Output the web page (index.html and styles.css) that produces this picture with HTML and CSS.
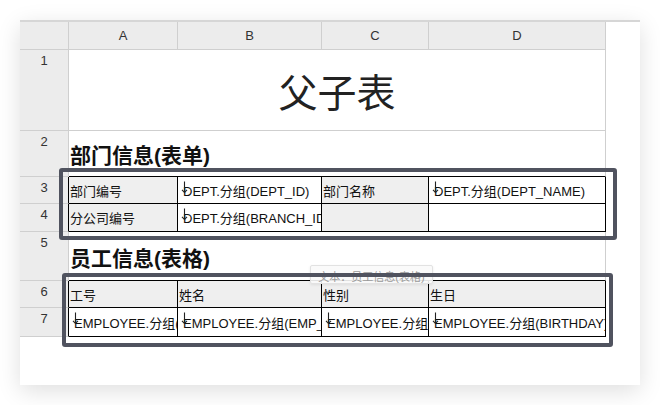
FILE: index.html
```html
<!DOCTYPE html>
<html lang="zh-CN">
<head>
  <meta charset="UTF-8">
  <meta name="viewport" content="width=device-width, initial-scale=1.0">
  <title>父子表</title>
  <link rel="stylesheet" href="styles.css">
</head>
<body>
  <div class="card">
    <div class="sheet">
      <div class="corner"></div>
      <div class="colhd">A</div>
      <div class="colhd">B</div>
      <div class="colhd">C</div>
      <div class="colhd">D</div>

      <div class="rowhd">1</div>
      <div class="cell merged title">父子表</div>

      <div class="rowhd">2</div>
      <div class="cell merged section edge-b">部门信息(表单)</div>

      <div class="rowhd edge-r">3</div>
      <div class="cell box label">部门编号</div>
      <div class="cell box field"><svg class="bind" width="7" height="13" viewBox="0 0 7 13"><path d="M3.5 0.5V11.5M1 8.8L3.5 11.5L6 8.8" /></svg>DEPT.分组(DEPT_ID)</div>
      <div class="cell box label">部门名称</div>
      <div class="cell box field"><svg class="bind" width="7" height="13" viewBox="0 0 7 13"><path d="M3.5 0.5V11.5M1 8.8L3.5 11.5L6 8.8" /></svg>DEPT.分组(DEPT_NAME)</div>

      <div class="rowhd edge-r">4</div>
      <div class="cell box label">分公司编号</div>
      <div class="cell box field"><svg class="bind" width="7" height="13" viewBox="0 0 7 13"><path d="M3.5 0.5V11.5M1 8.8L3.5 11.5L6 8.8" /></svg>DEPT.分组(BRANCH_ID)</div>
      <div class="cell box label"></div>
      <div class="cell box field"></div>

      <div class="rowhd">5</div>
      <div class="cell merged section edge-b">员工信息(表格)</div>

      <div class="rowhd edge-r">6</div>
      <div class="cell box label">工号</div>
      <div class="cell box label">姓名</div>
      <div class="cell box label">性别</div>
      <div class="cell box label">生日</div>

      <div class="rowhd edge-r">7</div>
      <div class="cell box field"><svg class="bind" width="7" height="13" viewBox="0 0 7 13"><path d="M3.5 0.5V11.5M1 8.8L3.5 11.5L6 8.8" /></svg>EMPLOYEE.分组(EMP_ID)</div>
      <div class="cell box field"><svg class="bind" width="7" height="13" viewBox="0 0 7 13"><path d="M3.5 0.5V11.5M1 8.8L3.5 11.5L6 8.8" /></svg>EMPLOYEE.分组(EMP_NAME)</div>
      <div class="cell box field"><svg class="bind" width="7" height="13" viewBox="0 0 7 13"><path d="M3.5 0.5V11.5M1 8.8L3.5 11.5L6 8.8" /></svg>EMPLOYEE.分组(SEX)</div>
      <div class="cell box field"><svg class="bind" width="7" height="13" viewBox="0 0 7 13"><path d="M3.5 0.5V11.5M1 8.8L3.5 11.5L6 8.8" /></svg>EMPLOYEE.分组(BIRTHDAY)</div>
    </div>

    <div class="select sel-dept"></div>
    <div class="tip">文本：员工信息(表格)</div>
    <div class="select sel-emp"></div>
  </div>
</body>
</html>
```

FILE: styles.css
```css
* {
  box-sizing: border-box;
}
body {
  margin: 0;
  padding: 20px;
  background: #ffffff;
  font-family: 'Liberation Sans', 'Noto Sans CJK SC', sans-serif;
  color: #111;
}
.card {
  position: relative;
  width: 620px;
  height: 365px;
  background: #ffffff;
  border-top: 2px solid #d6d6d6;
  box-shadow: 0 6px 22px rgba(0, 0, 0, 0.13);
}
.sheet {
  display: grid;
  width: 586px;
  grid-template-columns: 49px 109px 144px 107px 177px;
  grid-template-rows: 28px 81px 46px 27px 28px 49px 27px 29px;
}
.corner, .colhd, .rowhd, .cell {
  border-right: 1px solid #cfcfcf;
  border-bottom: 1px solid #cfcfcf;
  overflow: hidden;
  white-space: nowrap;
}
.corner, .colhd, .rowhd {
  background: #ececec;
  color: #333;
  font-size: 13px;
}
.colhd {
  display: flex;
  align-items: center;
  justify-content: center;
}
.rowhd {
  text-align: center;
  line-height: 20px;
  padding-top: 1px;
}
.cell {
  position: relative;
  display: flex;
  align-items: center;
  padding: 0 1px;
  font-size: 13px;
  background: #ffffff;
}
.merged {
  grid-column: 2 / 6;
}
.title {
  justify-content: center;
  font-size: 39px;
  color: #222;
}
.section {
  font-size: 21px;
  font-weight: bold;
  padding-top: 1px;
}
.edge-b {
  border-bottom-color: #000;
}
.edge-r {
  border-right-color: #000;
}
.box {
  border-right-color: #000;
  border-bottom-color: #000;
}
.label {
  background: #efefef;
}
.field {
  padding-left: 5px;
}
.bind {
  position: absolute;
  left: 3px;
  top: 4px;
  fill: none;
  stroke: #222;
  stroke-width: 1.1;
}
.select {
  position: absolute;
  border: 4px solid #50535f;
  border-radius: 3px;
}
.sel-dept {
  left: 39px;
  top: 146px;
  width: 558px;
  height: 72px;
}
.sel-emp {
  left: 42px;
  top: 251px;
  width: 551px;
  height: 74px;
}
.tip {
  position: absolute;
  left: 290px;
  top: 243px;
  width: 123px;
  height: 19px;
  padding-top: 2px;
  text-align: center;
  font-size: 11px;
  color: #9a9a9a;
  background: rgba(250, 250, 250, 0.9);
  border: 1px solid #e2e2e2;
  border-radius: 2px;
  box-shadow: 0 1px 3px rgba(0, 0, 0, 0.08);
}
```
